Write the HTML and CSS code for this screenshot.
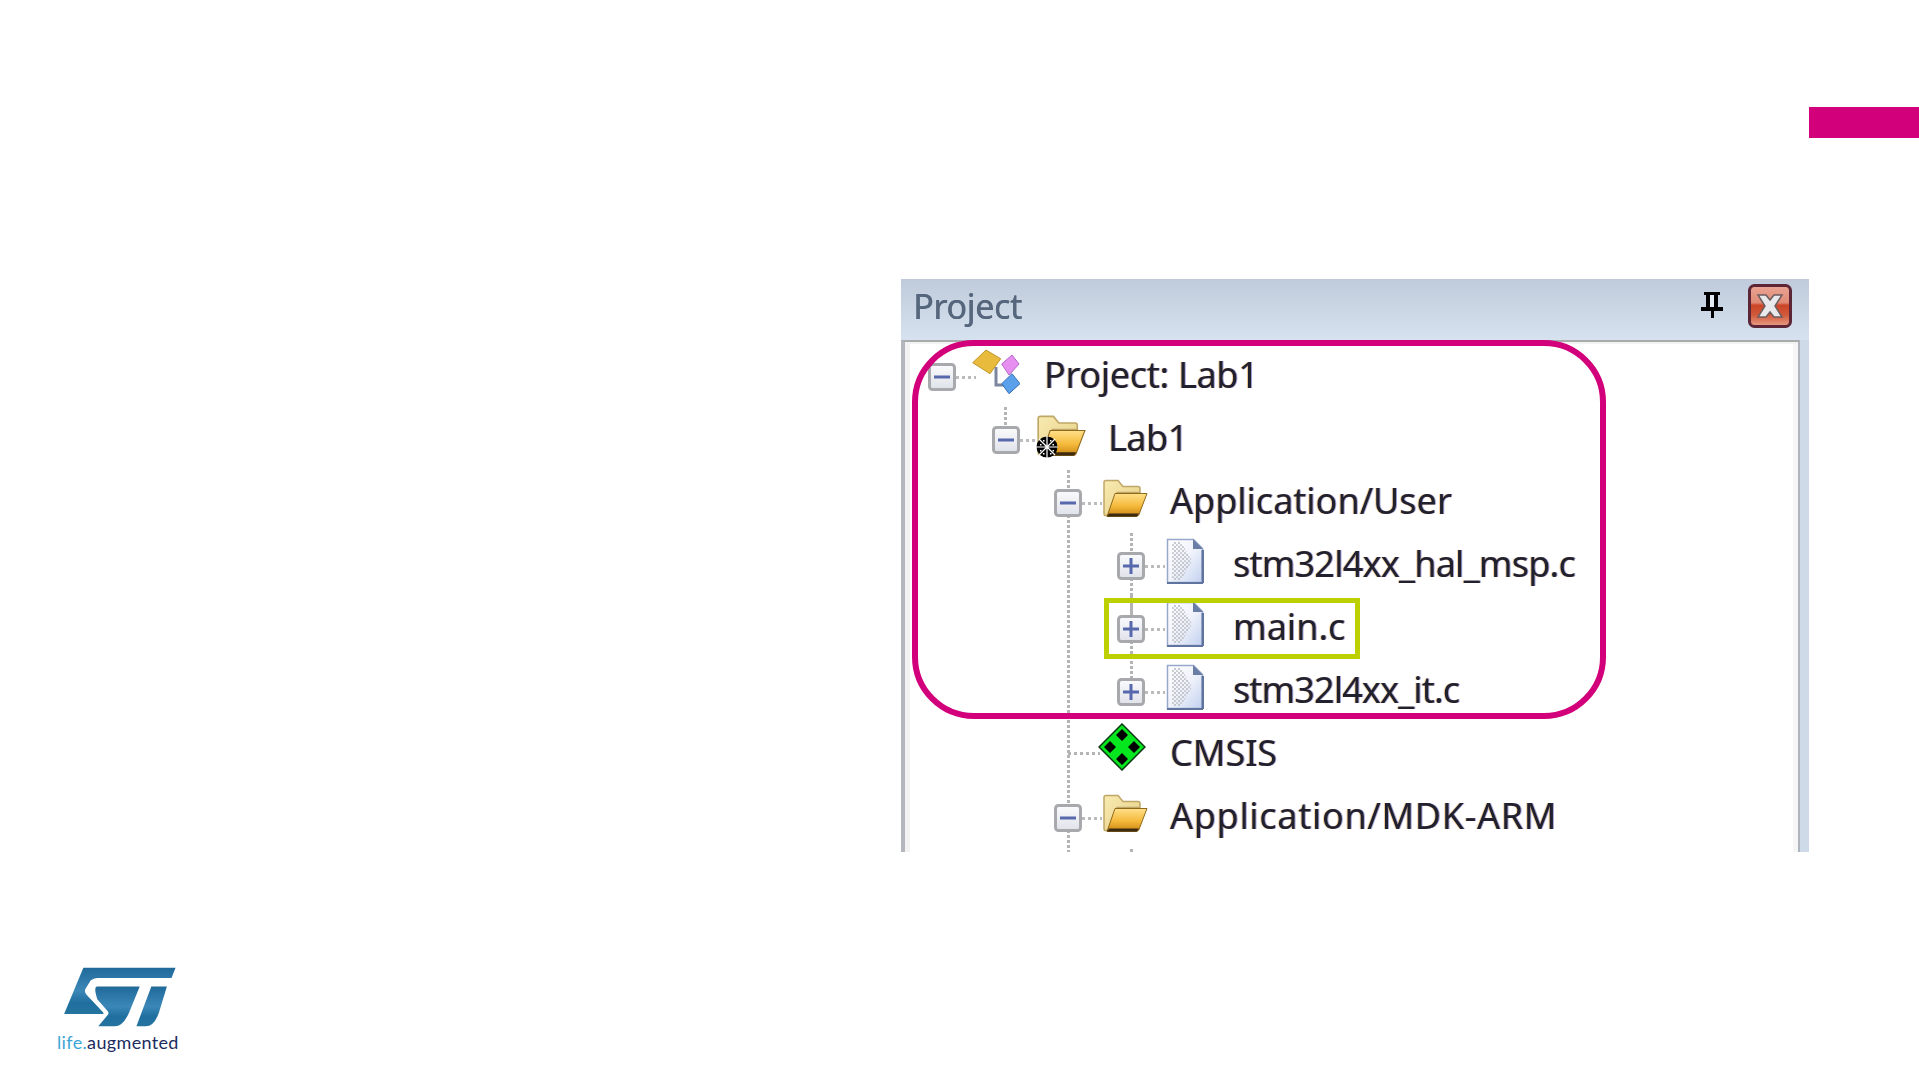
FILE: index.html
```html
<!DOCTYPE html>
<html lang="en">
<head>
<meta charset="utf-8">
<title>Project: Lab1</title>
<link rel="stylesheet" href="styles.css">
</head>
<body>
<svg class="defs" aria-hidden="true">
  <defs>
    <linearGradient id="boxFill" x1="0" y1="0" x2="0" y2="1"><stop offset="0" stop-color="#fbfbfc"/><stop offset="1" stop-color="#dfe2ea"/></linearGradient>
    <linearGradient id="flap" x1="0" y1="0" x2="0" y2="1"><stop offset="0" stop-color="#ffe08a"/><stop offset=".55" stop-color="#f5b93a"/><stop offset="1" stop-color="#c98412"/></linearGradient>
    <linearGradient id="back" x1="0" y1="0" x2="1" y2="1"><stop offset="0" stop-color="#f8eab0"/><stop offset="1" stop-color="#e6cf86"/></linearGradient>
    <linearGradient id="page" x1="0" y1="0" x2="1" y2="1"><stop offset="0" stop-color="#ffffff"/><stop offset=".5" stop-color="#f0f3fb"/><stop offset="1" stop-color="#c2d0ef"/></linearGradient>
    <pattern id="dots" width="4" height="4" patternUnits="userSpaceOnUse"><circle cx="1" cy="1" r="1.100" fill="#c0c2c8"/><circle cx="3" cy="3" r="1.100" fill="#c6c8ce"/></pattern>
    <linearGradient id="closeFill" x1="0" y1="0" x2="0" y2="1"><stop offset="0" stop-color="#eba595"/><stop offset=".42" stop-color="#e08a75"/><stop offset=".48" stop-color="#cc4527"/><stop offset=".72" stop-color="#d05a3a"/><stop offset="1" stop-color="#eaa08a"/></linearGradient>
    <linearGradient id="stBlue" x1="0" y1="0" x2="0" y2="1"><stop offset="0" stop-color="#1f6a99"/><stop offset=".5" stop-color="#3b87b8"/><stop offset=".75" stop-color="#1f6f9f"/><stop offset="1" stop-color="#25749f"/></linearGradient>
    <symbol id="minus" viewBox="0 0 28 28"><rect x="1.5" y="1.5" width="25" height="25" rx="3" fill="url(#boxFill)" stroke="#a7a9ac" stroke-width="3"/><path d="M6 14h16" stroke="#5768ad" stroke-width="3"/></symbol>
    <symbol id="plus" viewBox="0 0 28 28"><rect x="1.5" y="1.5" width="25" height="25" rx="3" fill="url(#boxFill)" stroke="#a7a9ac" stroke-width="3"/><path d="M6 14h16M14 6v16" stroke="#5768ad" stroke-width="3"/></symbol>
    <symbol id="folder" viewBox="0 0 46 38">
      <path d="M2 3q0-2 2-2h12l5 6h15q2 0 2 2v4H15L7 36H3q-1 0-1-2z" fill="url(#back)" stroke="#bfa767" stroke-width="1.5"/>
      <path d="M13 14h32l-8 21q-1 2-3 2H5z" fill="url(#flap)" stroke="#8f6a1c" stroke-width="1"/>
      <path d="M5 37h30l2-3H7z" fill="#3c2b10"/>
    </symbol>
    <symbol id="doc" viewBox="0 0 38 46">
      <path d="M1.5 1.5h26l9 9v34h-35z" fill="url(#page)" stroke="#98a8cc" stroke-width="1.5"/>
      <path d="M1 44h36v2H1zM35.500 12h2.500v33h-2.500z" fill="#5f749f"/>
      <path d="M27 1l10 10H27z" fill="#6a7ea5"/>
      <path d="M6 4h9l11 19-11 19H6z" fill="url(#dots)"/>
    </symbol>
    <symbol id="project" viewBox="0 0 48 46">
      <path d="M24 18v18h9" fill="none" stroke="#7c86a0" stroke-width="3"/>
      <path d="M0.700 13.700L14 1l14.700 8.700L18 24.700z" fill="#e8bb3d" stroke="#c0952a" stroke-width="1"/>
      <path d="M29.700 15L40 6l7 9-10 11z" fill="#e78ff0" stroke="#b566c8" stroke-width="1"/>
      <path d="M29.700 34.700L40 24.700l8 10-11 10z" fill="#5aa0ea" stroke="#3a6fb5" stroke-width="1"/>
    </symbol>
    <symbol id="cmsis" viewBox="0 0 48 48">
      <path d="M24 1l23 23-23 23L1 24z" fill="#06e61e" stroke="#0a3a12" stroke-width="1.500"/>
      <path d="M24 6l6 6-6 6-6-6zM24 30l6 6-6 6-6-6zM12 18l6 6-6 6-6-6zM36 18l6 6-6 6-6-6z" fill="#000"/>
    </symbol>
  </defs>
</svg>

<main class="slide">
  <div class="accent"></div>

  <section class="panel">
    <header class="titlebar">
      <span class="title">Project</span>
      <svg class="pin" viewBox="0 0 24 28"><path d="M4 1h16v3h-2v12h5v4H14v7h-3v-7H1v-4h5V4H4z" fill="#000"/><path d="M10 4h4v12h-4z" fill="#e4ebf3"/></svg>
      <svg class="close" viewBox="0 0 44 44"><rect x="1.5" y="1.5" width="41" height="41" rx="5" fill="url(#closeFill)" stroke="#5c2636" stroke-width="3"/><path d="M10 11h8l4 5 4-5h8l-7 11 7 11h-8l-4-5-4 5h-8l7-11z" fill="#e9e9ec" stroke="#6c5c60" stroke-width="1.5"/></svg>
    </header>

    <div class="body">
      <div class="tree">
        <i class="guide guide-l1a"></i>
        <i class="guide guide-l2a"></i>
        <i class="guide guide-l3a"></i>
        <i class="guide guide-l3b"></i>
        <i class="guide guide-l3c"></i>
        <i class="guide guide-cmsis"></i>

        <div class="row lvl0">
          <svg class="box"><use href="#minus"/></svg><i class="dash"></i>
          <span class="slot"><svg class="ico ico-project"><use href="#project"/></svg></span>
          <span class="label fit-project">Project: Lab1</span>
        </div>
        <div class="row lvl1">
          <svg class="box"><use href="#minus"/></svg><i class="dash"></i>
          <span class="slot">
            <svg class="ico ico-folder ico-folder-l1"><use href="#folder"/></svg>
            <svg class="gear" viewBox="0 0 22 22"><circle cx="11" cy="11" r="10.500" fill="#000"/><path d="M11 0v22M0 11h22M3 3l16 16M19 3L3 19" stroke="#fff" stroke-width="1.200"/><path d="M7 4h1.500v1.500H7zM14 4h1.500v1.500H14zM4 8h1.500v1.500H4zM16.500 8H18v1.500h-1.500zM4 14h1.500v1.500H4zM16.500 14H18v1.500h-1.500zM7 17h1.500v1.500H7zM14 17h1.500v1.500H14z" fill="#fff"/></svg>
          </span>
          <span class="label fit-lab">Lab1</span>
        </div>
        <div class="row lvl2">
          <svg class="box"><use href="#minus"/></svg><i class="dash"></i>
          <span class="slot"><svg class="ico ico-folder"><use href="#folder"/></svg></span>
          <span class="label">Application/User</span>
        </div>
        <div class="row lvl3">
          <svg class="box"><use href="#plus"/></svg><i class="dash"></i>
          <span class="slot"><svg class="ico ico-doc"><use href="#doc"/></svg></span>
          <span class="label fit-stm">stm32l4xx_hal_msp.c</span>
        </div>
        <div class="row lvl3">
          <svg class="box"><use href="#plus"/></svg><i class="dash"></i>
          <span class="slot"><svg class="ico ico-doc"><use href="#doc"/></svg></span>
          <span class="label">main.c</span>
        </div>
        <div class="row lvl3">
          <svg class="box"><use href="#plus"/></svg><i class="dash"></i>
          <span class="slot"><svg class="ico ico-doc"><use href="#doc"/></svg></span>
          <span class="label fit-stm-it">stm32l4xx_it.c</span>
        </div>
        <div class="row lvl2">
          <span class="box-gap"></span>
          <span class="slot"><svg class="ico ico-cmsis"><use href="#cmsis"/></svg></span>
          <span class="label">CMSIS</span>
        </div>
        <div class="row lvl2">
          <svg class="box"><use href="#minus"/></svg><i class="dash"></i>
          <span class="slot"><svg class="ico ico-folder"><use href="#folder"/></svg></span>
          <span class="label fit-mdk">Application/MDK-ARM</span>
        </div>
      </div>
    </div>

    <div class="frame-magenta"></div>
    <div class="frame-lime"></div>
  </section>

  <footer class="brand">
    <svg class="st-mark" viewBox="60 50 355 190">
      <path d="M130 55H408L396 86H172Q160 86 152 94L137 118Q131 128 141 138L190 190Q193 195 186 195H72Z" fill="url(#stBlue)"/>
      <path d="M172 112H300L268 190Q250 232 225 232H175L204 197Q208 191 203 186L172 150Q160 112 172 112Z" fill="url(#stBlue)"/>
      <path d="M335 112H382L358 190Q344 232 318 232H290Z" fill="url(#stBlue)"/>
    </svg>
    <div class="tagline"><span class="tag-life">life.</span><span class="tag-aug">augmented</span></div>
  </footer>
</main>
</body>
</html>
```

FILE: styles.css
```css
html, body { margin: 0; padding: 0; background: #fff; }
body { width: 1919px; height: 1080px; overflow: hidden; }
.defs { position: absolute; width: 0; height: 0; }

.slide { display: flex; flex-direction: column; width: 1919px; height: 1080px; }

.accent { align-self: flex-end; width: 110px; height: 31px; margin-top: 107px; background: #d2007b; }

.panel {
  position: relative;
  width: 908px;
  height: 573px;
  margin: 141px 0 0 901px;
  background: #cfdae8;
  font-family: "Noto Sans", "Open Sans", sans-serif;
}

.titlebar {
  display: flex;
  align-items: center;
  height: 61px;
  padding: 0 17px 0 12px;
  box-sizing: border-box;
  background: linear-gradient(#bfcbda, #d6e2ef);
}
.title { flex: 1; margin-top: -8px; font-size: 34px; letter-spacing: -.3px; color: #56667c; filter: blur(.5px); text-shadow: .4px 0 #56667c; }
.pin { width: 24px; height: 28px; margin-right: 24px; margin-top: -9px; filter: blur(.4px); }
.close { width: 44px; height: 44px; margin-top: -7px; filter: blur(.4px); }

.body {
  box-sizing: border-box;
  height: 512px;
  margin-right: 9px;
  background: #fff;
  border-left: 4px solid #b4b7bd;
  border-top: 2px solid #a9abad;
  border-right: 2px solid #aeb4bd;
  box-shadow: inset 5px 2px 0 #f3f3f4, inset -5px 0 0 #f6f6f6;
  overflow: hidden;
}

.tree { position: relative; padding-top: 1px; }

.guide {
  position: absolute;
  width: 3px;
  background: repeating-linear-gradient(to bottom, #b4b4b4 0 3px, transparent 3px 5px);
}
.guide-l1a { left: 99px; top: 65px; height: 22px; }
.guide-l2a { left: 162px; top: 128px; height: 384px; }
.guide-l3a { left: 225px; top: 191px; height: 84px; }
.guide-l3b { left: 225px; top: 254px; height: 84px; }
.guide-l3c { left: 225px; top: 507px; height: 5px; }
.guide-cmsis { left: 163px; top: 410px; width: 32px; height: 3px; background: repeating-linear-gradient(to right, #b4b4b4 0 3px, transparent 3px 6px); }

.row {
  position: relative;
  display: flex;
  align-items: center;
  height: 63px;
}
.lvl0 { padding-left: 23px; }
.lvl1 { padding-left: 87px; }
.lvl2 { padding-left: 149px; }
.lvl3 { padding-left: 212px; }

.box { flex: none; width: 28px; height: 28px; margin-top: 5px; filter: blur(.5px); }
.box-gap { flex: none; width: 48px; }
.dash {
  flex: none;
  width: 20px;
  height: 3px;
  margin-top: 5px;
  background: repeating-linear-gradient(to right, #bcbcbc 0 3px, transparent 3px 6px);
}
.slot { position: relative; flex: none; display: flex; width: 48px; height: 46px; margin-right: 20px; }

.ico { display: block; flex: none; filter: blur(.5px); }
.ico-project { width: 48px; height: 46px; margin: -3px 0 0 -4px; }
.ico-folder { width: 46px; height: 39px; margin-top: 1px; }
.ico-folder-l1 { width: 50px; height: 42px; margin: 0 0 0 -4px; }
.ico-doc { width: 38px; height: 46px; margin: -3px 0 0 1px; }
.ico-cmsis { width: 48px; height: 48px; margin: -7px 0 0 -4px; }

.gear { position: absolute; left: -4px; top: 21px; width: 22px; height: 22px; filter: blur(.4px); }

.label {
  font-size: 36px;
  line-height: 1;
  white-space: nowrap;
  color: #20202e;
  filter: blur(.45px);
  text-shadow: -1px 0 rgba(240, 170, 70, .55), 1px 0 rgba(80, 90, 190, .55);
}
.fit-project { letter-spacing: -.3px; }
.fit-lab { letter-spacing: -.5px; }
.fit-stm { letter-spacing: -.78px; }
.fit-stm-it { letter-spacing: -.87px; }
.fit-mdk { letter-spacing: .7px; }

.frame-magenta {
  position: absolute;
  left: 11px;
  top: 61px;
  width: 694px;
  height: 379px;
  box-sizing: border-box;
  border: 6px solid #d2007a;
  border-radius: 62px;
}
.frame-lime {
  position: absolute;
  left: 203px;
  top: 319px;
  width: 256px;
  height: 61px;
  box-sizing: border-box;
  border: 5px solid #bccf00;
}

.brand { margin: 114px 0 0 60px; width: 130px; }
.st-mark { display: block; width: 118px; height: 63px; }
.tagline {
  margin: 3px 0 0 -3px;
  font-family: "Lato", "Roboto", sans-serif;
  font-size: 18px;
  line-height: 20px;
  letter-spacing: .35px;
  white-space: nowrap;
}
.tag-life { color: #3ba6d6; }
.tag-aug { color: #1c2b5e; }
```
